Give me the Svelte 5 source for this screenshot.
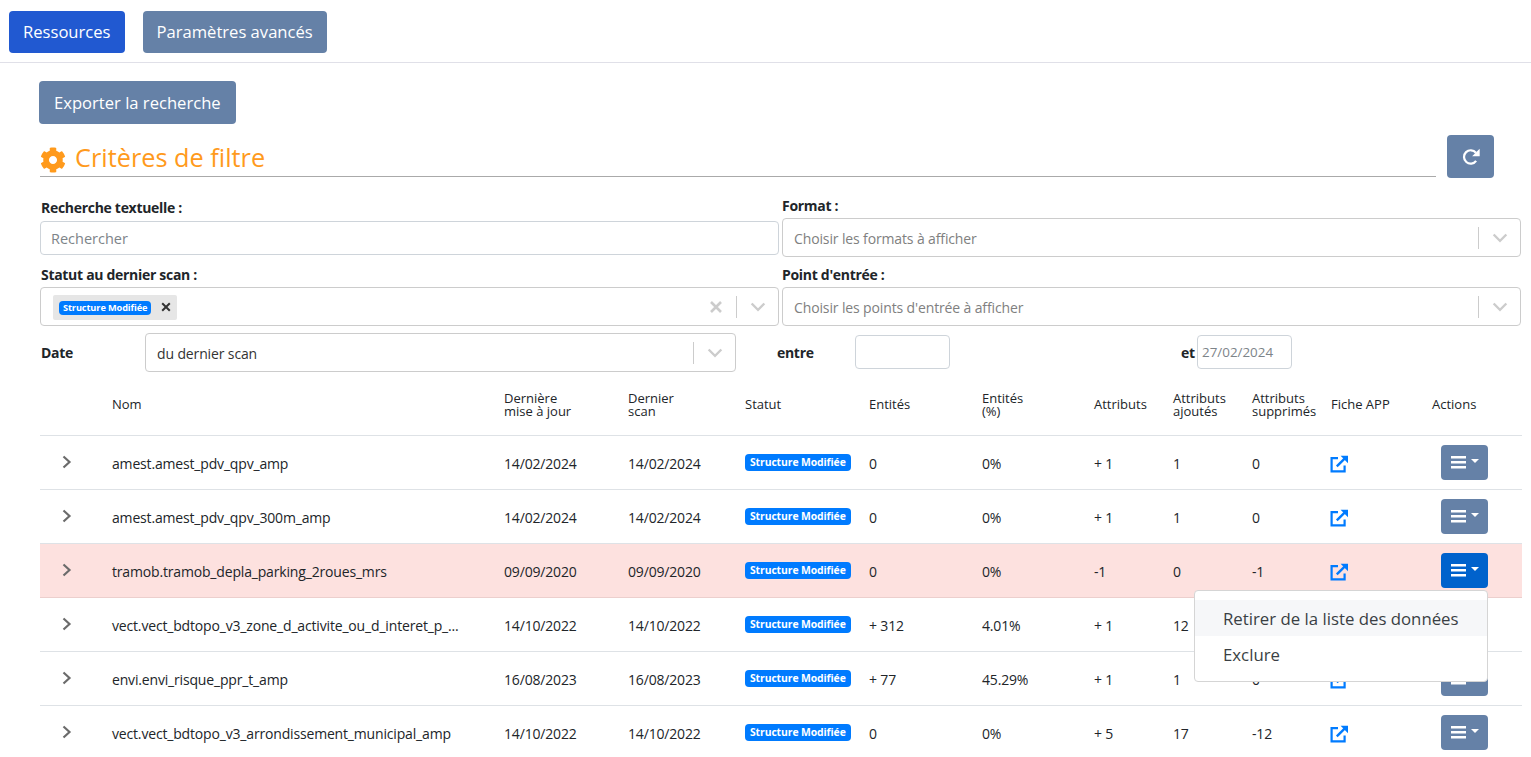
<script>
  const rows = [
    { nom: 'amest.amest_pdv_qpv_amp', maj: '14/02/2024', scan: '14/02/2024', ent: '0', pct: '0%', attr: '+ 1', add: '1', del: '0' },
    { nom: 'amest.amest_pdv_qpv_300m_amp', maj: '14/02/2024', scan: '14/02/2024', ent: '0', pct: '0%', attr: '+ 1', add: '1', del: '0' },
    { nom: 'tramob.tramob_depla_parking_2roues_mrs', maj: '09/09/2020', scan: '09/09/2020', ent: '0', pct: '0%', attr: '-1', add: '0', del: '-1', open: true },
    { nom: 'vect.vect_bdtopo_v3_zone_d_activite_ou_d_interet_p_...', maj: '14/10/2022', scan: '14/10/2022', ent: '+ 312', pct: '4.01%', attr: '+ 1', add: '12', del: '0' },
    { nom: 'envi.envi_risque_ppr_t_amp', maj: '16/08/2023', scan: '16/08/2023', ent: '+ 77', pct: '45.29%', attr: '+ 1', add: '1', del: '0' },
    { nom: 'vect.vect_bdtopo_v3_arrondissement_municipal_amp', maj: '14/10/2022', scan: '14/10/2022', ent: '0', pct: '0%', attr: '+ 5', add: '17', del: '-12' },
  ];
</script>

{#snippet chevron()}
  <span class="sel-ind">
    <svg width="20" height="20" viewBox="0 0 20 20"><path fill="currentColor" d="M4.5 7.2 10 12.7l5.5-5.5 1.7 1.6L10 16 2.8 8.8z" transform="translate(0 -1.5)"/></svg>
  </span>
{/snippet}

<nav class="topbar">
  <button class="btn primary">Ressources</button>
  <button class="btn">Paramètres avancés</button>
</nav>

<main class="content">
  <button class="btn export">Exporter la recherche</button>

  <div class="title-row">
    <h2>
      <svg class="gear" viewBox="0 0 512 512"><path fill="currentColor" d="M487.4 315.7l-42.6-24.6c4.3-23.2 4.3-47 0-70.2l42.6-24.6c4.9-2.8 7.1-8.6 5.5-14-11.1-35.6-30-67.8-54.7-94.6-3.8-4.1-10-5.1-14.8-2.3L380.8 110c-17.9-15.4-38.5-27.3-60.8-35.1V25.8c0-5.6-3.9-10.5-9.4-11.7-36.7-8.2-74.3-7.8-109.2 0-5.5 1.2-9.4 6.1-9.4 11.7V75c-22.2 7.9-42.8 19.8-60.8 35.1L88.7 85.5c-4.9-2.8-11-1.9-14.8 2.3-24.7 26.7-43.6 58.9-54.7 94.6-1.7 5.4.6 11.2 5.5 14L67.3 221c-4.3 23.2-4.3 47 0 70.2l-42.6 24.6c-4.9 2.8-7.1 8.6-5.5 14 11.1 35.6 30 67.8 54.7 94.6 3.8 4.1 10 5.1 14.8 2.3l42.6-24.6c17.9 15.4 38.5 27.3 60.8 35.1v49.2c0 5.6 3.9 10.5 9.4 11.7 36.7 8.2 74.3 7.8 109.2 0 5.5-1.2 9.4-6.1 9.4-11.7v-49.2c22.2-7.9 42.8-19.8 60.8-35.1l42.6 24.6c4.9 2.8 11 1.9 14.8-2.3 24.7-26.7 43.6-58.9 54.7-94.6 1.5-5.5-.7-11.3-5.6-14.1zM256 336c-44.1 0-80-35.9-80-80s35.9-80 80-80 80 35.9 80 80-35.9 80-80 80z"/></svg>
      Critères de filtre
    </h2>
    <button class="btn refresh" aria-label="Rafraîchir">
      <svg width="20" height="20" viewBox="0 0 18 18"><path fill="none" stroke="currentColor" stroke-width="2" d="M13.6 12.4A6 6 0 1 1 13.4 5.2"/><path fill="currentColor" d="M16.8 1.6v6.8H10z"/></svg>
    </button>
  </div>

  <div class="filters">
    <div class="field">
      <label class="tall" for="search">Recherche textuelle :</label>
      <input id="search" class="input" placeholder="Rechercher" />
    </div>
    <div class="field">
      <span class="label right raised">Format :</span>
      <div class="select">
        <span class="placeholder">Choisir les formats à afficher</span>
        <span class="sep"></span>
        {@render chevron()}
      </div>
    </div>
    <div class="field">
      <span class="label mid">Statut au dernier scan :</span>
      <div class="select">
        <span class="chip">
          <span class="badge">Structure Modifiée</span>
          <svg class="chip-x" width="10" height="10" viewBox="0 0 10 10"><path fill="none" stroke="currentColor" stroke-width="2" d="M1.2 1.2l7.6 7.6M8.8 1.2 1.2 8.8"/></svg>
        </span>
        <span class="clear">
          <svg width="14" height="14" viewBox="0 0 14 14"><path fill="none" stroke="currentColor" stroke-width="2.6" d="M2 2l10 10M12 2 2 12"/></svg>
        </span>
        <span class="sep"></span>
        {@render chevron()}
      </div>
    </div>
    <div class="field">
      <span class="label mid right">Point d'entrée :</span>
      <div class="select">
        <span class="placeholder">Choisir les points d'entrée à afficher</span>
        <span class="sep"></span>
        {@render chevron()}
      </div>
    </div>
  </div>

  <div class="date-row">
    <b class="date-label">Date</b>
    <div class="select date-select">
      <span class="value">du dernier scan</span>
      <span class="sep"></span>
      {@render chevron()}
    </div>
    <b class="entre">entre</b>
    <input class="input date-input" />
    <b class="et">et</b>
    <input class="input date-input end" placeholder="27/02/2024" />
  </div>

  <table>
    <colgroup>
      <col style="width:60px" /><col style="width:392px" /><col style="width:124px" /><col style="width:117px" />
      <col style="width:124px" /><col style="width:113px" /><col style="width:112px" /><col style="width:79px" />
      <col style="width:79px" /><col style="width:79px" /><col style="width:101px" /><col style="width:102px" />
    </colgroup>
    <thead>
      <tr>
        <th></th>
        <th>Nom</th>
        <th>Dernière<br />mise à jour</th>
        <th>Dernier<br />scan</th>
        <th>Statut</th>
        <th>Entités</th>
        <th>Entités<br />(%)</th>
        <th>Attributs</th>
        <th>Attributs<br />ajoutés</th>
        <th>Attributs<br />supprimés</th>
        <th>Fiche APP</th>
        <th>Actions</th>
      </tr>
    </thead>
    <tbody>
      {#each rows as r}
        <tr class:alert={r.open}>
          <td class="toggle">
            <svg width="12" height="16" viewBox="0 0 12 16"><path fill="none" stroke="currentColor" stroke-width="2.2" d="M2.5 2.5 8.5 8l-6 5.5"/></svg>
          </td>
          <td>{r.nom}</td>
          <td>{r.maj}</td>
          <td>{r.scan}</td>
          <td><span class="badge">Structure Modifiée</span></td>
          <td>{r.ent}</td>
          <td>{r.pct}</td>
          <td>{r.attr}</td>
          <td>{r.add}</td>
          <td>{r.del}</td>
          <td class="link">
            <svg width="18" height="18" viewBox="0 0 18 18"><path fill="none" stroke="currentColor" stroke-width="2.2" d="M8 3.2H1.6v13.2h13V10.5"/><path fill="none" stroke="currentColor" stroke-width="2.4" d="M6.8 11.4 15.6 2.6"/><path fill="currentColor" d="M10.6.8H18v7.4z"/></svg>
          </td>
          <td class="actions">
            <button class="btn menu" class:active={r.open} aria-label="Actions">
              <svg width="16" height="13" viewBox="0 0 16 13"><path fill="currentColor" d="M0 0h15v2.6H0zM0 5h15v2.6H0zM0 10h15v2.6H0z"/></svg>
              <span class="caret"></span>
            </button>
            {#if r.open}
              <div class="dropdown">
                <div class="item hover">Retirer de la liste des données</div>
                <div class="item">Exclure</div>
              </div>
            {/if}
          </td>
        </tr>
      {/each}
    </tbody>
  </table>
</main>

<style>
  :global(body) {
    margin: 0;
    background: #fff;
    color: #212529;
    font-family: "Open Sans", "Liberation Sans", sans-serif;
    overflow: hidden;
  }

  .topbar {
    display: flex;
    gap: 18px;
    padding: 11px 9px 9px;
    border-bottom: 1px solid #e0e0e8;
  }
  .topbar .btn { padding: 0 14px 2px; }

  .btn {
    font: inherit;
    font-size: 16.6px;
    height: 42px;
    padding: 0 15px;
    color: #fff;
    background: #6581a7;
    border: 0;
    border-radius: 4px;
  }
  .primary { background: #2159d1; }

  .content { padding: 18px 9px 0 40px; }

  .export { height: 43px; margin-left: -1px; display: block; }

  .title-row {
    display: flex;
    align-items: flex-end;
    gap: 11px;
    margin-top: 11px;
    padding-right: 28px;
  }

  h2 {
    flex: 1;
    margin: 0 0 1px;
    height: 41px;
    padding-top: 2px;
    box-sizing: border-box;
    display: flex;
    align-items: center;
    gap: 9px;
    font-size: 25.3px;
    font-weight: 400;
    color: #ff9a1c;
    border-bottom: 1px solid #aaa;
  }
  .gear { width: 26px; height: 26px; margin-top: 6px; }

  .refresh {
    width: 47px;
    height: 43px;
    padding: 0;
    display: flex;
    align-items: center;
    justify-content: center;
  }

  .filters {
    display: grid;
    grid-template-columns: 739px 739px;
    column-gap: 3px;
    margin-top: 20px;
    row-gap: 8px;
  }

  .field { display: flex; flex-direction: column; }

  label, .label {
    font-size: 14px;
    font-weight: 700;
    letter-spacing: -0.3px;
    line-height: 20px;
    height: 20px;
    padding-left: 1px;
  }
  .tall { height: 23px; }
  .mid { height: 22px; }
  .right { padding-left: 0; }
  .raised { line-height: 16px; }

  .input {
    box-sizing: border-box;
    font: inherit;
    font-size: 14.5px;
    height: 34px;
    padding: 0 10px;
    border: 1px solid #ced4da;
    border-radius: 4px;
    outline: none;
    color: #495057;
  }
  .input::placeholder { color: #7d8489; opacity: 1; }

  .select {
    box-sizing: border-box;
    display: flex;
    align-items: center;
    height: 39px;
    padding-left: 11px;
    padding-top: 1px;
    border: 1px solid #ccc;
    border-radius: 4px;
    background: #fff;
    font-size: 14px;
    letter-spacing: -0.13px;
  }
  .placeholder { color: #808080; flex: 1; }
  .value { color: #333; flex: 1; }
  .sep { width: 1px; height: 22px; background: #ccc; }
  .sel-ind { width: 41px; display: flex; justify-content: center; color: #ccc; }
  .clear { color: #ccc; display: flex; margin-left: auto; margin-right: 13px; }

  .chip {
    display: flex;
    align-items: center;
    gap: 10px;
    height: 25px;
    padding: 0 6px 0 6px;
    margin-left: 1px;
    background: #e6e6e6;
    border-radius: 2px;
  }
  .chip .badge { font-size: 9.2px; padding: 0 4px; height: 14px; line-height: 14px; margin-top: 2px; }
  .chip-x { color: #333; }

  .date-row {
    display: flex;
    align-items: center;
    margin-top: 7px;
    font-size: 14px;
    letter-spacing: -0.3px;
  }
  .date-row b { font-weight: 700; }
  .date-label { width: 105px; padding-left: 1px; box-sizing: border-box; }
  .date-select { width: 591px; }
  .entre { margin-left: 41px; width: 78px; }
  .date-input { width: 95px; height: 34px; font-size: 13.4px; padding: 0 4px; margin-top: -2px; }
  .et { margin-left: 231px; width: 16px; }

  table {
    width: 1482px;
    border-collapse: collapse;
    table-layout: fixed;
    margin-top: 7px;
    font-size: 14px;
    letter-spacing: -0.17px;
  }

  th {
    height: 51px;
    padding: 0 0 5px 12px;
    text-align: left;
    font-size: 13px;
    font-weight: 500;
    letter-spacing: 0;
    line-height: 13px;
    color: #212529;
    white-space: nowrap;
    border-bottom: 1px solid #dee2e6;
    vertical-align: middle;
  }

  td {
    height: 51px;
    padding: 2px 0 0 12px;
    border-bottom: 1px solid #dee2e6;
    white-space: nowrap;
    overflow: visible;
  }

  tr.alert td { background: #fde1df; border-bottom-color: #eccfcd; }

  td.toggle { padding-left: 21px; color: #6b6b6b; }
  .toggle svg { display: block; margin-top: -3px; }

  .badge {
    display: inline-block;
    background: #007bff;
    color: #fff;
    font-size: 10.4px;
    font-weight: 700;
    letter-spacing: -0.1px;
    line-height: 17px;
    height: 17px;
    padding: 0 5px;
    border-radius: 4px;
    vertical-align: 3px;
  }

  .link { color: #007bff; }
  .link svg { display: block; margin: 1px 0 0 -1px; }

  td.actions { position: relative; padding-left: 21px; }

  .menu {
    width: 47px;
    height: 35px;
    padding: 0;
    display: flex;
    align-items: center;
    justify-content: center;
    gap: 4px;
    margin-top: -2px;
  }
  .menu.active { background: #0062cc; }

  .caret {
    width: 0;
    height: 0;
    border-left: 4px solid transparent;
    border-right: 4px solid transparent;
    border-top: 4px solid #fff;
    margin-top: -4px;
  }

  .dropdown {
    position: absolute;
    top: 46px;
    left: -226px;
    width: 292px;
    padding: 9px 0;
    background: #fff;
    border: 1px solid #d5d5d5;
    border-radius: 4px;
    z-index: 5;
    font-size: 16.8px;
    letter-spacing: 0;
  }
  .item { height: 36px; line-height: 38px; padding-left: 28px; color: #3a3f44; }
  .item.hover { background: #f6f7f9; }
</style>
